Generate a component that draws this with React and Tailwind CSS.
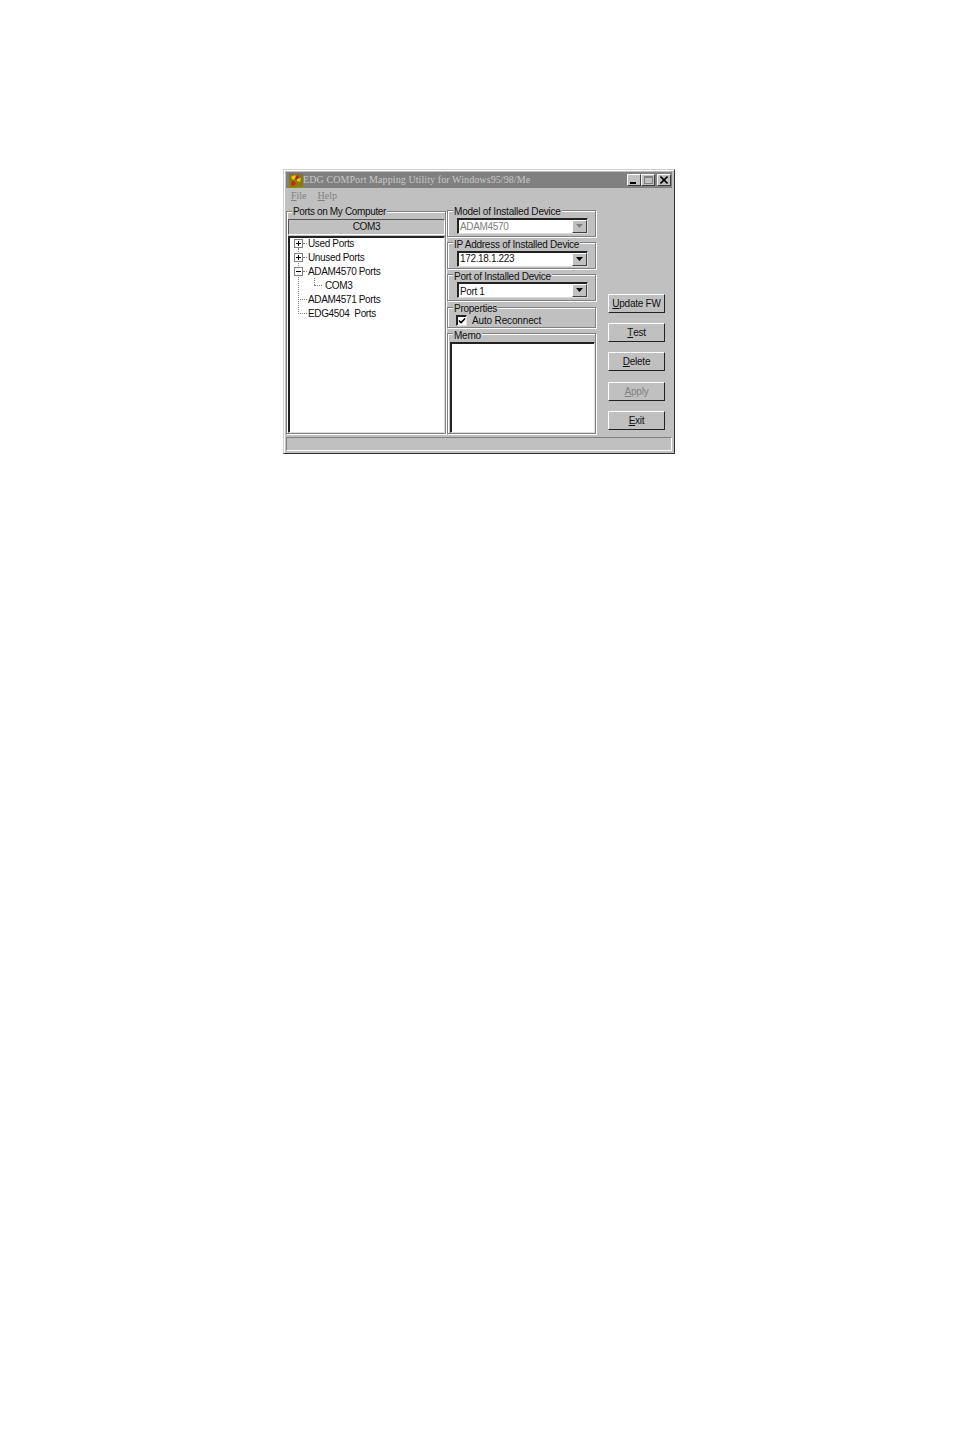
import { Check } from "lucide-react";

const raisedBox =
  "border border-t-white border-l-white border-r-[#404040] border-b-[#404040]";
const sunkenBox =
  "border border-t-[#222] border-l-[#222] border-r-[#ddd] border-b-[#ddd] shadow-[inset_1px_1px_0_#222]";
const uiText = "text-[10px] leading-none tracking-[-0.35px]";

function Group({ label, className, legendClass = "top-[-5px] tracking-[-0.35px]", children }) {
  return (
    <div className={`relative border border-[#808080] shadow-[inset_1px_1px_0_#fff,1px_1px_0_#fff] ${className}`}>
      <span className={`absolute left-[5px] whitespace-nowrap bg-[#c0c0c0] px-px text-[10px] leading-none text-[#111] ${legendClass}`}>
        {label}
      </span>
      {children}
    </div>
  );
}

function Combo({ value, disabled, textClass = "" }) {
  return (
    <div className={`flex h-[16px] w-[131px] items-center bg-white pl-[2px] ${sunkenBox}`}>
      <span className={`flex-1 ${uiText} ${textClass} ${disabled ? "text-[#808080]" : "text-[#111]"}`}>
        {value}
      </span>
      <span className={`flex h-[13px] w-[15px] items-center justify-center bg-[#c0c0c0] ${raisedBox}`}>
        <svg width="7" height="4" viewBox="0 0 7 4">
          <path d="M0 0h7L3.5 4z" fill={disabled ? "#808080" : "#000"} />
        </svg>
      </span>
    </div>
  );
}

function PushButton({ accessKey, rest, disabled, className = "" }) {
  return (
    <div
      className={`flex h-[19px] w-[57px] items-center justify-center border border-t-white border-l-white border-r-[#222] border-b-[#222] text-[10px] leading-none tracking-[-0.25px] ${
        disabled ? "text-[#808080]" : "text-[#111]"
      } ${className}`}
    >
      <span className="underline underline-offset-1">{accessKey}</span>
      {rest}
    </div>
  );
}

function Expander({ open }) {
  return (
    <svg width="9" height="9" viewBox="0 0 9 9" className="relative shrink-0">
      <rect x="0.5" y="0.5" width="8" height="8" fill="#fff" stroke="#808080" />
      <path d={open ? "M2 4.5h5" : "M2 4.5h5M4.5 2v5"} stroke="#000" />
    </svg>
  );
}

function TreeRow({ indent, expander, open, label, dots = "w-[4px]", gap = "ml-px" }) {
  return (
    <div className={`flex h-[14px] items-center pb-px ${indent}`}>
      {expander && <Expander open={open} />}
      <span className={`h-px border-t border-dotted border-[#808080] ${dots}`} />
      <span className={`whitespace-pre text-[#111] ${uiText} ${gap}`}>{label}</span>
    </div>
  );
}

export default function App() {
  return (
    <div className="min-h-[1434px] bg-white pl-[283px] pt-[169px] font-['Liberation_Sans',Arial,sans-serif]">
      <div className="h-[285px] w-[392px] border border-t-[#d0d0d0] border-l-[#d0d0d0] border-r-[#333] border-b-[#333] bg-[#c0c0c0] p-[2px] shadow-[inset_1px_1px_0_#fff]">
        {/* title bar */}
        <div className="flex h-[16px] items-center bg-[#808080] pl-[3px] pr-px">
          <svg width="14" height="14" viewBox="0 0 14 14" className="shrink-0">
            <rect width="14" height="14" fill="#8a7a10" />
            <path d="M2 4l4-2 1 3-3 2zM8 6l4-1-1 4-3-1z" fill="#e8c820" />
            <path d="M2 9l3-1 2 3-4 2z" fill="#d02010" />
            <path d="M6 5l3-3 1 2-3 3z" fill="#c81818" />
          </svg>
          <span className="flex-1 whitespace-nowrap font-['Liberation_Serif',serif] text-[10px] leading-none tracking-[0.09px] text-[#c8c8c8]">
            EDG COMPort Mapping Utility for Windows95/98/Me
          </span>
          <span className={`flex h-[12px] w-[14px] items-end justify-start bg-[#c0c0c0] pb-px pl-[2px] ${raisedBox}`}>
            <span className="h-[2px] w-[6px] bg-black" />
          </span>
          <span className={`flex h-[12px] w-[14px] items-center justify-center bg-[#c0c0c0] ${raisedBox}`}>
            <span className="h-[8px] w-[9px] border border-t-2 border-[#808080]" />
          </span>
          <span className={`ml-[2px] flex h-[12px] w-[14px] items-center justify-center bg-[#c0c0c0] ${raisedBox}`}>
            <svg width="8" height="8" viewBox="0 0 8 8">
              <path d="M0.5 0.5l7 7M7.5 0.5l-7 7" stroke="#000" strokeWidth="1.6" />
            </svg>
          </span>
        </div>

        {/* menu */}
        <div className="flex h-[18px] items-center gap-[11px] pb-[2px] pl-[5px] font-['Liberation_Serif',serif] text-[10px] leading-none text-[#808080]">
          <span><span className="underline">F</span>ile</span>
          <span><span className="underline">H</span>elp</span>
        </div>

        <div className="flex h-[228px] pt-[4px]">
          {/* ports */}
          <Group label="Ports on My Computer" className="mt-[1px] flex h-[223px] w-[160px] flex-col pl-[1px] pt-[7px]">
            <div className={`flex h-[16px] w-[157px] items-center justify-center border border-t-[#555] border-l-[#555] border-r-white border-b-white text-[#111] ${uiText}`}>
              COM3
            </div>
            <div className={`relative mt-[1px] h-[197px] w-[157px] bg-white pl-[5px] ${sunkenBox}`}>
              <span className="absolute left-[9px] top-[11px] h-[66px] border-l border-dotted border-[#808080]" />
              <span className="absolute left-[25px] top-[41px] h-[7px] border-l border-dotted border-[#808080]" />
              <TreeRow expander label="Used Ports" />
              <TreeRow expander label="Unused Ports" />
              <TreeRow expander open label="ADAM4570 Ports" />
              <TreeRow indent="pl-[20px]" dots="w-[8px]" gap="ml-[3px]" label="COM3" />
              <TreeRow indent="pl-[4px]" dots="w-[9px]" label="ADAM4571 Ports" />
              <TreeRow indent="pl-[4px]" dots="w-[9px]" label="EDG4504  Ports" />
            </div>
          </Group>

          {/* device settings */}
          <div className="ml-px flex w-[149px] flex-col gap-[5px]">
            <Group label="Model of Installed Device" legendClass="top-[-4px] tracking-[-0.2px]" className="h-[27px] pl-[9px] pt-[7px]">
              <Combo value="ADAM4570" disabled textClass="pt-px" />
            </Group>
            <Group label="IP Address of Installed Device" legendClass="top-[-3px] tracking-[-0.25px]" className="h-[27px] pl-[9px] pt-[8px]">
              <Combo value="172.18.1.223" textClass="pb-px" />
            </Group>
            <Group label="Port of Installed Device" legendClass="top-[-3px] tracking-[-0.25px]" className="h-[27px] pl-[9px] pt-[7px]">
              <Combo value="Port 1" textClass="pt-[3px]" />
            </Group>
            <Group label="Properties" legendClass="top-[-4px] tracking-[-0.25px]" className="mt-px flex h-[21px] items-center pl-[8px] pt-[6px]">
              <span className={`flex h-[11px] w-[11px] items-center justify-center bg-white ${sunkenBox}`}>
                <Check size={8} strokeWidth={5} color="#000" />
              </span>
              <span className="ml-[5px] text-[10px] leading-none tracking-[-0.15px] text-[#111]">Auto Reconnect</span>
            </Group>
            <Group label="Memo" legendClass="top-[-3px] tracking-[-0.25px]" className="h-[101px] pl-[2px] pt-[8px]">
              <div className={`h-[91px] w-[145px] bg-white ${sunkenBox}`} />
            </Group>
          </div>

          {/* actions */}
          <div className="ml-[12px] flex flex-col pt-[84px]">
            <PushButton accessKey="U" rest="pdate FW" />
            <PushButton accessKey="T" rest="est" className="mt-[10px]" />
            <PushButton accessKey="D" rest="elete" className="mt-[10px]" />
            <PushButton accessKey="A" rest="pply" disabled className="mt-[11px]" />
            <PushButton accessKey="E" rest="xit" className="mt-[10px]" />
          </div>
        </div>

        {/* status bar */}
        <div className="mt-[3px] h-[14px] border border-t-[#808080] border-l-[#808080] border-r-white border-b-white" />
      </div>
    </div>
  );
}
